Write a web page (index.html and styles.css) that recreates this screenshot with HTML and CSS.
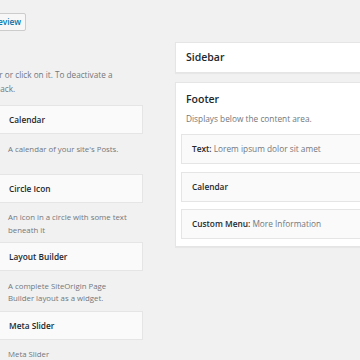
FILE: index.html
```html
<!DOCTYPE html>
<html lang="en">
<head>
    <meta charset="UTF-8">
    <meta name="viewport" content="width=device-width, initial-scale=1.0">
    <title>Widgets</title>
    <link rel="stylesheet" href="styles.css">
</head>
<body>
    <div class="wrap">
        <div class="widgets-left">
            <div class="page-actions">
                <a class="page-title-action" href="#">Manage with Live Preview</a>
            </div>

            <p class="intro">
                <span>To activate a widget drag it to a sidebar or click on it. To deactivate a</span>
                <span>widget and delete its settings, drag it back.</span>
            </p>

            <ul class="widget-list available">
                <li class="widget">
                    <div class="widget-top"><h3 class="widget-title">Calendar</h3></div>
                    <p class="widget-description">A calendar of your site's Posts.</p>
                </li>
                <li class="widget">
                    <div class="widget-top"><h3 class="widget-title">Circle Icon</h3></div>
                    <p class="widget-description">An icon in a circle with some text beneath it</p>
                </li>
                <li class="widget">
                    <div class="widget-top"><h3 class="widget-title">Layout Builder</h3></div>
                    <p class="widget-description">A complete SiteOrigin Page Builder layout as a widget.</p>
                </li>
                <li class="widget">
                    <div class="widget-top"><h3 class="widget-title">Meta Slider</h3></div>
                    <p class="widget-description">Meta Slider</p>
                </li>
            </ul>
        </div>

        <div class="widgets-right">
            <div class="sidebar-box closed">
                <h2 class="sidebar-name">Sidebar</h2>
            </div>

            <div class="sidebar-box open">
                <h2 class="sidebar-name">Footer</h2>
                <p class="sidebar-description">Displays below the content area.</p>

                <ul class="widget-list in-sidebar">
                    <li class="widget">
                        <h3 class="widget-title">Text:<span class="in-widget-title"> Lorem ipsum dolor sit amet</span></h3>
                    </li>
                    <li class="widget">
                        <h3 class="widget-title">Calendar</h3>
                    </li>
                    <li class="widget">
                        <h3 class="widget-title">Custom Menu:<span class="in-widget-title"> More Information</span></h3>
                    </li>
                </ul>
            </div>
        </div>
    </div>
</body>
</html>
```

FILE: styles.css
```css
* {
    margin: 0;
    padding: 0;
    box-sizing: border-box;
}

body {
    font-family: 'Open Sans', 'Liberation Sans', sans-serif;
    background: #f1f1f1;
    color: #444;
    overflow: hidden;
}

ul {
    list-style: none;
}

.wrap {
    display: flex;
    align-items: flex-start;
    gap: 32px;
}

/* available widgets */

.widgets-left {
    width: 143px;
    flex-shrink: 0;
}

.page-actions {
    width: 26px;
    padding-top: 13px;
    display: flex;
    justify-content: flex-end;
}

.page-title-action {
    flex-shrink: 0;
    white-space: nowrap;
    height: 18px;
    padding: 0 4px 0 5px;
    border: 1px solid #ccc;
    border-radius: 2px;
    background: #f7f7f7;
    color: #0073aa;
    text-decoration: none;
    font-size: 8.3px;
    font-weight: 600;
    line-height: 16px;
}

.intro {
    margin: 37px 0 0 -146.5px;
    white-space: nowrap;
    font-size: 8.2px;
    line-height: 13.6px;
    color: #72777c;
}

.intro span {
    display: block;
}

.available {
    margin: 10px 0 0 -1px;
}

.available .widget-top {
    height: 29px;
    border: 1px solid #e5e5e5;
    background: #fafafa;
}

.widget-title {
    padding: 0 9px;
    font-size: 8.3px;
    font-weight: 600;
    line-height: 27px;
    color: #23282d;
    white-space: nowrap;
}

.widget-description {
    height: 39.5px;
    padding: 8.5px 9px 0;
    font-size: 7.8px;
    line-height: 12.5px;
    color: #72777c;
}

/* sidebars */

.widgets-right {
    width: 240px;
    flex-shrink: 0;
    padding-top: 42px;
}

.sidebar-box {
    background: #fff;
    border: 1px solid #e5e5e5;
    box-shadow: 0 1px 1px rgba(0, 0, 0, 0.04);
}

.sidebar-box + .sidebar-box {
    margin-top: 9px;
}

.sidebar-name {
    font-size: 10.5px;
    font-weight: 600;
    color: #23282d;
}

.closed .sidebar-name {
    padding: 0 10px;
    line-height: 29px;
}

.open {
    padding: 9px 5px 7px;
}

.open .sidebar-name {
    padding: 0 5px;
    line-height: 14px;
}

.sidebar-description {
    margin-top: 7px;
    padding: 0 5px;
    font-size: 8.3px;
    line-height: 12px;
    color: #72777c;
}

.in-sidebar {
    margin-top: 9px;
}

.in-sidebar .widget {
    height: 30px;
    border: 1px solid #e5e5e5;
    background: #fafafa;
    margin-bottom: 7.5px;
}

.in-sidebar .widget:last-child {
    margin-bottom: 0;
}

.in-sidebar .widget-title {
    padding: 0 10px;
    line-height: 28px;
}

.in-widget-title {
    font-weight: 400;
    color: #72777c;
}
```
